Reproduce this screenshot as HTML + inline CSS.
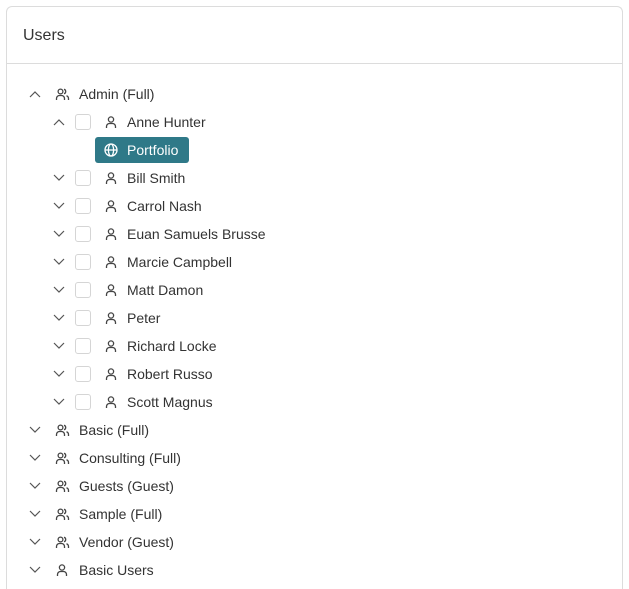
<!DOCTYPE html>
<html><head><style>
html,body{margin:0;width:629px;height:589px;overflow:hidden}
body{background:#fff;font-family:"Liberation Sans",sans-serif;position:relative}
.card{position:absolute;left:6px;top:6px;width:615px;height:582px;border:1px solid #dcdcdc;border-bottom:0;border-radius:6px 6px 0 0}
.hdr{position:absolute;left:0;top:0;right:0;height:56px;border-bottom:1px solid #dcdcdc}
.hdr span{position:absolute;left:16px;top:20px;font-size:16px;color:#333}
.row{position:absolute;height:28px;left:0;right:0;font-size:14px;color:#333}
.row span{position:absolute;top:6px}
.row svg{position:absolute}
.cb{position:absolute;left:75px;top:6px;width:14px;height:14px;border:1px solid #d5d5d5;border-radius:3px;background:#fff}
.pill{position:absolute;left:95px;top:137px;width:94px;height:26px;background:#2f7988;border-radius:3px;color:#fff;font-size:14px}
</style></head><body>
<div class="card"><div class="hdr"><span>Users</span></div></div>
<div id="t"></div>
<div class="pill"><svg style="position:absolute;left:9px;top:6px" width="14" height="14" viewBox="0 0 14 14" fill="none" stroke="#fff" stroke-width="1.3"><circle cx="7" cy="7" r="6"/><ellipse cx="7" cy="7" rx="2.6" ry="6"/><path d="M1 7h12"/></svg><span style="position:absolute;left:32px;top:5px">Portfolio</span></div>
<script>
var dn='<path d="M1 1l5 5 5-5"/>';
function chev(x,u){return '<svg style="left:'+x+'px;top:10px" width="12" height="8" viewBox="0 0 12 8" fill="none" stroke="#555" stroke-width="1.2">'+(u?'<path d="M1 7l5-5 5 5"/>':dn)+'</svg>';}
function user(x){return '<svg style="left:'+x+'px;top:7px" width="14" height="14" viewBox="0 0 14 14" fill="none" stroke="#444" stroke-width="1.3"><circle cx="7" cy="4.5" r="2.6"/><path d="M2.5 13v-1.5a3 3 0 0 1 3-3h3a3 3 0 0 1 3 3V13"/></svg>';}
function grp(x){return '<svg style="left:'+x+'px;top:7px" width="15" height="14" viewBox="0 0 15 14" fill="none" stroke="#444" stroke-width="1.3"><circle cx="5.5" cy="4.5" r="2.4"/><path d="M1.5 13v-1.5a3 3 0 0 1 3-3h2a3 3 0 0 1 3 3V13"/><path d="M9 2.2a2.4 2.4 0 0 1 0 4.6M11.5 8.8a3 3 0 0 1 2 2.7V13"/></svg>';}
var h='',y=80;
function r0(t,u,g){h+='<div class="row" style="top:'+y+'px">'+chev(29,u)+(g?grp(55):user(55))+'<span style="left:79px">'+t+'</span></div>';y+=28;}
function r1(t,u){h+='<div class="row" style="top:'+y+'px">'+chev(53,u)+'<div class="cb"></div>'+user(104)+'<span style="left:127px">'+t+'</span></div>';y+=28;}
r0('Admin (Full)',1,1);r1('Anne Hunter',1);y+=28;
['Bill Smith','Carrol Nash','Euan Samuels Brusse','Marcie Campbell','Matt Damon','Peter','Richard Locke','Robert Russo','Scott Magnus'].forEach(function(n){r1(n,0)});
['Basic (Full)','Consulting (Full)','Guests (Guest)','Sample (Full)','Vendor (Guest)'].forEach(function(n){r0(n,0,1)});
r0('Basic Users',0,0);
document.getElementById('t').innerHTML=h;
</script>
</body></html>
